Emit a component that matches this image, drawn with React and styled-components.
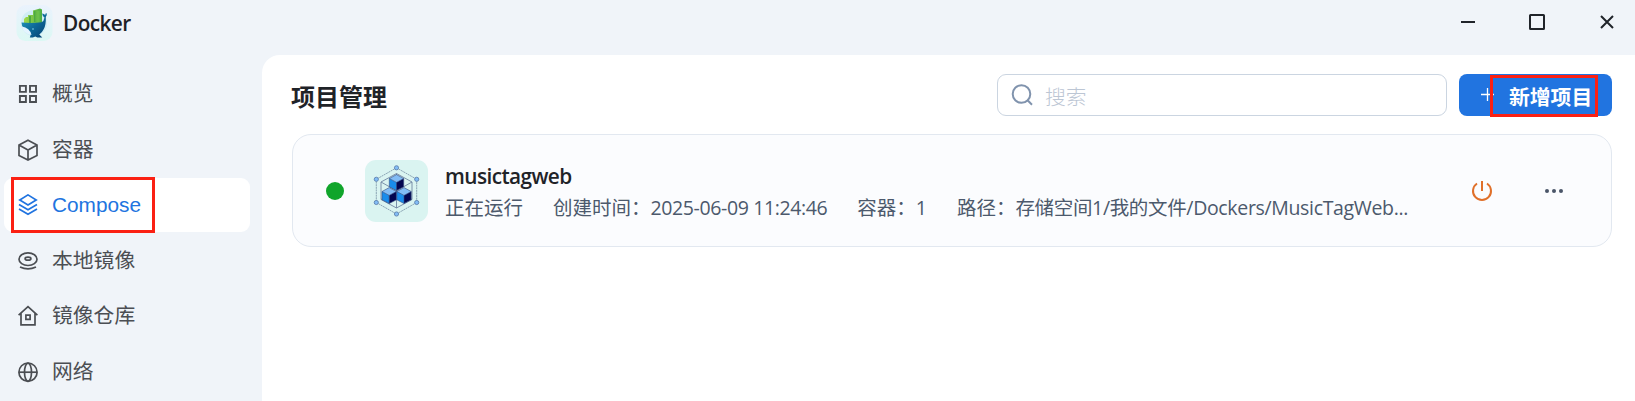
import React from "react";
import styled, { createGlobalStyle } from "styled-components";

const Global = createGlobalStyle`
  * { box-sizing: border-box; }
  body {
    margin: 0;
    overflow: hidden;
    background: #f0f4f9;
    font-family: "Open Sans", "Noto Sans CJK SC", sans-serif;
  }
`;

const Window = styled.div`
  display: flex;
  flex-direction: column;
  width: 1635px;
  height: 401px;
  overflow: hidden;
`;

const TitleBar = styled.header`
  display: flex;
  align-items: center;
  flex: 0 0 55px;
  padding: 0 19px 11px 16px;
`;

const AppName = styled.span`
  margin-left: 10px;
  padding-top: 1px;
  font-size: 20.8px;
  line-height: 28px;
  font-weight: 600;
  letter-spacing: -0.6px;
  color: #1d2126;
`;

const WindowControls = styled.div`
  display: flex;
  gap: 49px;
  margin-left: auto;
`;

const Body = styled.div`
  display: flex;
  flex: 1;
  min-height: 0;
`;

const Sidebar = styled.nav`
  display: flex;
  flex-direction: column;
  gap: 1.6px;
  flex: 0 0 262px;
  padding: 12px 12px 0 4px;
`;

const NavItem = styled.a`
  position: relative;
  display: flex;
  align-items: center;
  gap: 14px;
  flex: 0 0 54px;
  padding-left: 14px;
  border-radius: 9px;
  background: ${(p) => (p.$active ? "#fff" : "transparent")};
  color: ${(p) => (p.$active ? "#2174e0" : "#4b4e53")};
  font: 20.8px/30px "Liberation Sans", "Noto Sans CJK SC", sans-serif;
`;

const Highlight = styled.span`
  position: absolute;
  border: 3px solid #fb2013;
  pointer-events: none;
  left: ${(p) => p.$left}px;
  top: ${(p) => p.$top}px;
  width: ${(p) => p.$width}px;
  height: ${(p) => p.$height}px;
`;

const Main = styled.main`
  display: flex;
  flex-direction: column;
  flex: 1;
  gap: 18px;
  padding: 19px 23px 0 30px;
  border-top-left-radius: 18px;
  background: #fff;
`;

const Toolbar = styled.div`
  display: flex;
  align-items: center;
  height: 42px;
`;

const Heading = styled.h1`
  margin: 0 auto 0 -1px;
  padding-top: 3px;
  font-size: 24px;
  line-height: 36px;
  font-weight: 700;
  color: #1f2328;
`;

const SearchBox = styled.div`
  display: flex;
  align-items: center;
  gap: 10px;
  width: 450px;
  height: 42px;
  padding-left: 13px;
  border: 1px solid #cbd5e1;
  border-radius: 9px;
  font-size: 20.8px;
  line-height: 30px;
  font-weight: 300;
  color: #bcc6d4;
`;

const Placeholder = styled.span`
  padding-top: 4px;
`;

const AddButton = styled.button`
  position: relative;
  display: flex;
  align-items: center;
  gap: 15px;
  width: 153px;
  height: 42px;
  margin-left: 12px;
  padding: 0 0 0 22px;
  border: 0;
  border-radius: 8px;
  background: #2174e0;
  color: #fff;
  font: 700 20.8px/30px "Noto Sans CJK SC", sans-serif;
  white-space: nowrap;
`;

const ButtonLabel = styled.span`
  padding-top: 2px;
`;

const ProjectCard = styled.article`
  display: flex;
  align-items: center;
  height: 113px;
  padding: 0 47px 0 33px;
  border: 1px solid #e2e8f0;
  border-radius: 19px;
  background: #fbfcfe;
`;

const StatusDot = styled.span`
  width: 18px;
  height: 18px;
  border-radius: 50%;
  background: #10a52b;
`;

const ProjectIcon = styled.div`
  display: flex;
  width: 63px;
  height: 62px;
  margin: 0 17px 0 21px;
  border-radius: 11px;
  background: #daf4f1;
`;

const ProjectInfo = styled.div`
  display: flex;
  flex-direction: column;
  padding-top: 4px;
`;

const ProjectName = styled.div`
  font-size: 20.8px;
  line-height: 30px;
  font-weight: 600;
  letter-spacing: -0.58px;
  color: #1f2328;
`;

const MetaRow = styled.div`
  display: flex;
  gap: 30px;
  font-size: 19.5px;
  line-height: 33px;
  color: #4c596c;
  white-space: nowrap;
`;

const MetaValue = styled.span`
  letter-spacing: ${(p) => p.$spacing || 0}px;
`;

const Actions = styled.div`
  display: flex;
  align-items: center;
  gap: 51px;
  margin-left: auto;
`;

const NavSvg = ({ children }) => (
  <svg width="20" height="22" viewBox="0 0 20 22" fill="none" stroke="currentColor" strokeWidth="1.7">
    {children}
  </svg>
);

const icons = {
  overview: (
    <NavSvg>
      <path d="M1.9 2.9h6v6h-6zM12 2.9h6v6h-6zM1.9 13h6v6h-6zM12 13h6v6h-6z" strokeWidth="1.9" />
    </NavSvg>
  ),
  container: (
    <NavSvg>
      <path d="M10 1.2 19 6v10.5L10 21l-9-4.5V6zM1 6l9 5 9-5M10 11v10" />
    </NavSvg>
  ),
  compose: (
    <NavSvg>
      <path d="M10 .9 18.2 6 10 11 1.8 6zM1 10.4l9 5.3 9-5.3M1 14.9l9 5.4 9-5.4" />
    </NavSvg>
  ),
  image: (
    <NavSvg>
      <ellipse cx="10" cy="9.2" rx="9" ry="6.3" />
      <ellipse cx="10" cy="8.7" rx="2.9" ry="1.5" />
      <path d="M2 17q8 3.8 16 0" />
    </NavSvg>
  ),
  registry: (
    <NavSvg>
      <path d="M.6 10.2 10 1.7l9.4 8.5M3 8.6v11.2h14V8.6" />
      <path d="M7.9 10.2h4.2v4.2H7.9z" />
    </NavSvg>
  ),
  network: (
    <NavSvg>
      <circle cx="10" cy="11.2" r="9.1" />
      <ellipse cx="10" cy="11.2" rx="3.5" ry="9.1" />
      <path d="M1 11.2h18" />
    </NavSvg>
  ),
};

const WhaleLogo = () => (
  <svg width="37" height="38" viewBox="0 0 37 38">
    <defs>
      <linearGradient id="tile" x1="0" y1="0" x2="0" y2="1">
        <stop offset="0" stopColor="#eaf2fd" />
        <stop offset="1" stopColor="#dcf8f4" />
      </linearGradient>
      <linearGradient id="whale" x1="0" y1="0" x2="1" y2="1">
        <stop offset="0" stopColor="#26a2c4" />
        <stop offset="0.55" stopColor="#0c6796" />
        <stop offset="1" stopColor="#073f70" />
      </linearGradient>
      <linearGradient id="leaf" x1="0" y1="0" x2="1" y2="0">
        <stop offset="0" stopColor="#a3da4b" />
        <stop offset="1" stopColor="#4cae45" />
      </linearGradient>
    </defs>
    <rect x="0.5" y="2" width="36" height="36" rx="9" fill="url(#tile)" />
    <circle cx="18" cy="20" r="13" fill="#c5eaf3" opacity=".65" />
    <path d="M8 20v-4l2-2h2v-2h5V7.500l7-2 2 1V20z" fill="url(#leaf)" />
    <path d="M13 13h2v7h-2zM18 8h1.500v11H18z" fill="#4ca943" />
    <path d="M21 8h2.500v12H21z" fill="#6ac04a" />
    <path d="M5.500 19.500q11 1 20-.300 2.500-1 3-4.700-2-1-2.400-4 2 0 3 1.600Q29.500 10 30.500 10q1 2-.700 4 .300 8-2 12-2 4-4.500 5.500l3 3h-5l-2-1-2.500 1h-3l1-3Q6 28 5.500 19.500z" fill="url(#whale)" />
    <path d="M5.800 23.500q8 1 9.700 8.500-8-1-9.700-8.500z" fill="#e4f4ff" />
    <circle cx="17" cy="26" r=".8" fill="#8bdaf0" />
  </svg>
);

const Cube = ({ x, y }) => (
  <g transform={`translate(${x} ${y})`}>
    <path d="M0 0 7.200-3.900 14.400 0 7.200 3.900z" fill="#82bcf5" />
    <path d="M0 0 7.200 3.900V12L0 8.300z" fill="#198ceb" />
    <path d="M14.400 0 7.200 3.900V12l7.200-3.700z" fill="#020650" />
    <path d="M0 0 7.200-3.900 14.400 0v8.300L7.200 12 0 8.300zM0 0l7.200 3.900L14.400 0M7.200 3.900V12" fill="none" stroke="#354b80" strokeWidth=".6" />
  </g>
);

const nodes = [[31.5, 7.8], [51.7, 19.3], [51.7, 42.5], [31.5, 54], [11.3, 42.5], [11.3, 19.3]];

const CubesLogo = () => (
  <svg width="63" height="62" viewBox="0 0 63 62">
    <polygon points={nodes.map((n) => n.join(",")).join(" ")} fill="none" stroke="#829cae" strokeWidth=".9" strokeDasharray="2 .6" />
    <path d="M31.500 13.500 47 22v17.500L31.500 48 16 39.500V22zM16 22l31 17.500M47 22 16 39.500M31.500 13.500V48" fill="none" stroke="#7186a2" strokeWidth=".9" />
    <Cube x={24.3} y={18.5} />
    <Cube x={17} y={31.5} />
    <Cube x={31.8} y={31.5} />
    {nodes.map(([cx, cy]) => (
      <circle key={`${cx}-${cy}`} cx={cx} cy={cy} r="2.1" fill="#82bcf5" stroke="#5578a8" strokeWidth=".8" />
    ))}
  </svg>
);

const navigation = [
  ["overview", "概览"],
  ["container", "容器"],
  ["compose", "Compose"],
  ["image", "本地镜像"],
  ["registry", "镜像仓库"],
  ["network", "网络"],
];

export default function App() {
  return (
    <Window>
      <Global />
      <TitleBar>
        <WhaleLogo />
        <AppName>Docker</AppName>
        <WindowControls>
          <svg width="20" height="20" viewBox="0 0 20 20"><path d="M3 10h14" stroke="#20242a" strokeWidth="2" /></svg>
          <svg width="20" height="20" viewBox="0 0 20 20"><rect x="3" y="3" width="14" height="14" rx=".5" fill="none" stroke="#20242a" strokeWidth="2" /></svg>
          <svg width="20" height="20" viewBox="0 0 20 20"><path d="m5 4 12 12M17 4 5 16" stroke="#20242a" strokeWidth="2" /></svg>
        </WindowControls>
      </TitleBar>
      <Body>
        <Sidebar>
          {navigation.map(([key, label]) => (
            <NavItem key={key} $active={key === "compose"}>
              {icons[key]}
              <span>{label}</span>
              {key === "compose" && <Highlight $left={7} $top={-1} $width={144} $height={56} />}
            </NavItem>
          ))}
        </Sidebar>
        <Main>
          <Toolbar>
            <Heading>项目管理</Heading>
            <SearchBox>
              <svg width="24" height="24" viewBox="0 0 24 24" fill="none" stroke="#8093ad" strokeWidth="2">
                <circle cx="10.5" cy="11" r="8.8" />
                <path d="m16.300 17 4.700 4.700" />
              </svg>
              <Placeholder>搜索</Placeholder>
            </SearchBox>
            <AddButton>
              <svg width="13" height="14" viewBox="0 0 13 14"><path d="M0 6.500h13M6.500 0v13" stroke="#fff" strokeWidth="1.300" /></svg>
              <ButtonLabel>新增项目</ButtonLabel>
              <Highlight $left={31} $top={1} $width={108} $height={42} />
            </AddButton>
          </Toolbar>
          <ProjectCard>
            <StatusDot />
            <ProjectIcon><CubesLogo /></ProjectIcon>
            <ProjectInfo>
              <ProjectName>musictagweb</ProjectName>
              <MetaRow>
                <span>正在运行</span>
                <span>创建时间：<MetaValue $spacing={-0.38}>2025-06-09 11:24:46</MetaValue></span>
                <span>容器：1</span>
                <span>路径：<MetaValue $spacing={-0.34}>存储空间1/我的文件/Dockers/MusicTagWeb...</MetaValue></span>
              </MetaRow>
            </ProjectInfo>
            <Actions>
              <svg width="22" height="22" viewBox="0 0 22 22" fill="none" stroke="#e0702a" strokeWidth="2">
                <path d="M6 3.500a9 9 0 1 0 10 0M11 1v10" />
              </svg>
              <svg width="20" height="20" viewBox="0 0 20 20" fill="#4a5568">
                <circle cx="3" cy="10" r="2" />
                <circle cx="10" cy="10" r="2" />
                <circle cx="17" cy="10" r="2" />
              </svg>
            </Actions>
          </ProjectCard>
        </Main>
      </Body>
    </Window>
  );
}
